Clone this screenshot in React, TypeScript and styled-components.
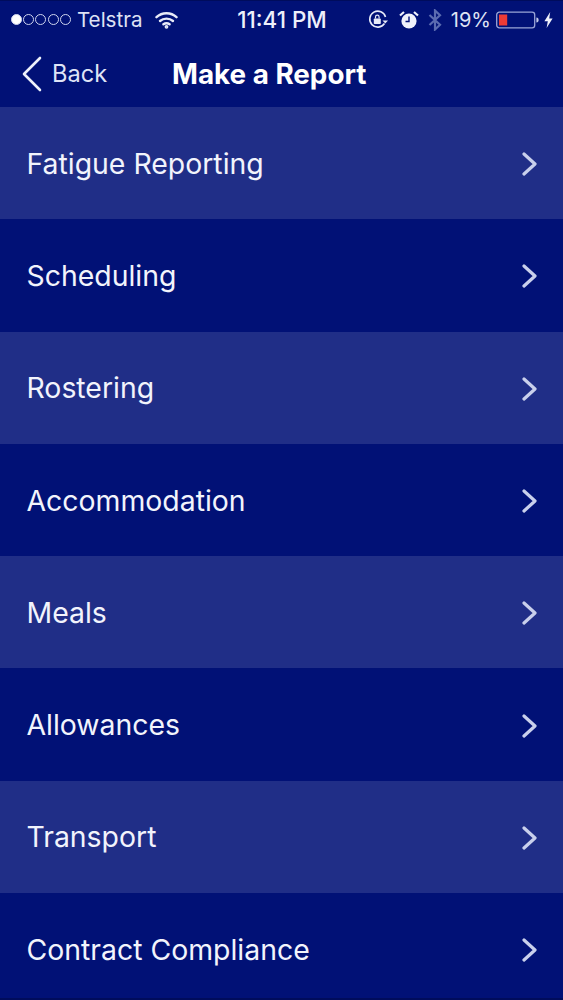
import React from 'react';
import styled, { createGlobalStyle } from 'styled-components';

const GlobalStyle = createGlobalStyle`
  html, body {
    margin: 0;
    padding: 0;
    background: #011176;
    font-family: Inter, "Liberation Sans", sans-serif;
  }
`;

const Screen = styled.div`
  width: 563px;
  height: 1000px;
  box-sizing: border-box;
  border-top: 1px solid #000c5c;
  border-bottom: 2px solid #000c5c;
  overflow: hidden;
  display: flex;
  flex-direction: column;
  background: #011176;
  color: #f2f4fc;
`;

const StatusBar = styled.div`
  height: 39px;
  flex-shrink: 0;
  box-sizing: border-box;
  padding: 0 10px 2px 11px;
  display: grid;
  grid-template-columns: 1fr auto 1fr;
  align-items: center;
  font-size: 20px;
  color: #dfe3f4;
`;

const StatusLeft = styled.div`
  display: flex;
  align-items: center;
`;

const StatusRight = styled.div`
  display: flex;
  align-items: center;
  justify-content: flex-end;
`;

const Clock = styled.div`
  font-size: 22.4px;
  font-weight: 500;
  color: #eef0fa;
`;

const Dot = styled.span<{ $filled?: boolean }>`
  width: 11px;
  height: 11px;
  box-sizing: border-box;
  margin-right: 1.2px;
  border-radius: 50%;
  border: 1px solid #cfd5ee;
  background: ${p => (p.$filled ? '#ffffff' : 'transparent')};
`;

const Carrier = styled.span`
  margin-left: 5px;
  margin-right: 12px;
  font-size: 20.6px;
`;

const NavBar = styled.div`
  height: 67px;
  flex-shrink: 0;
  box-sizing: border-box;
  padding-left: 22px;
  display: flex;
  align-items: center;
`;

const BackLabel = styled.span`
  margin-left: 10px;
  width: 120px;
  font-size: 23.6px;
  color: #dfe4f6;
`;

const Title = styled.div`
  font-size: 27.8px;
  font-weight: 700;
  color: #ffffff;
`;

const List = styled.div`
  display: flex;
  flex-direction: column;
`;

const Row = styled.div<{ $light: boolean }>`
  height: 112.3px;
  flex-shrink: 0;
  box-sizing: border-box;
  padding: 0 25px 0 26.5px;
  display: flex;
  align-items: center;
  justify-content: space-between;
  font-size: 28.4px;
  background: ${p => (p.$light ? '#202e87' : '#011176')};
`;

const ChevronIcon = styled.svg`
  margin-top: 2px;
`;

const Wifi = () => (
  <svg width="23" height="18" viewBox="0 0 23 18" fill="none" stroke="#e8ebf8" strokeWidth="2.4" strokeLinecap="round">
    <path d="M1.5 6.2C7 1 16 1 21.5 6.2" />
    <path d="M5 10C8.6 6.8 14.4 6.8 18 10" />
    <path d="M8.4 13.3C10.2 12 12.8 12 14.6 13.3" />
    <circle cx="11.5" cy="15.8" r="0.7" fill="#e8ebf8" />
  </svg>
);

const RotationLock = () => (
  <svg width="22" height="22" viewBox="0 0 22 22" fill="none">
    <path d="M17.5 14.5A8 8 0 1 1 18.5 8" stroke="#e8ebf8" strokeWidth="1.6" />
    <path d="M15.5 11.5h5.5l-2.7 3z" fill="#e8ebf8" />
    <rect x="6.8" y="9.5" width="7" height="5.5" rx="0.8" fill="#e8ebf8" />
    <path d="M8.5 9.5V8a1.8 1.8 0 0 1 3.6 0v1.5" stroke="#e8ebf8" strokeWidth="1.2" />
  </svg>
);

const Alarm = () => (
  <svg width="20" height="20" viewBox="0 0 20 20" fill="none">
    <circle cx="10" cy="11" r="7.6" fill="#f0f2fb" />
    <path d="M10 6.5V11.5H6.5" stroke="#011176" strokeWidth="1.4" />
    <path d="M1 5.5L5 2M19 5.5L15 2" stroke="#f0f2fb" strokeWidth="2.2" />
  </svg>
);

const Bluetooth = () => (
  <svg width="14" height="22" viewBox="0 0 14 22" fill="none" stroke="#5b6bb0" strokeWidth="2.2">
    <path d="M1.5 6L12 15.8L7 20.5V1.5L12 6.2L1.5 16" />
  </svg>
);

const Battery = () => (
  <svg width="43" height="18" viewBox="0 0 43 18" fill="none">
    <rect x="0.7" y="1.2" width="38" height="15.6" rx="2.6" stroke="#9aa5d6" strokeWidth="1.3" />
    <rect x="3" y="3.5" width="8.2" height="11" fill="#ee3b35" />
    <path d="M40.4 6.5c1.6 0 2.2 1 2.2 2.5s-.6 2.5-2.2 2.5z" fill="#c5cbe8" />
  </svg>
);

const Bolt = () => (
  <svg width="9" height="16" viewBox="0 0 9 16">
    <path d="M6.2 0L0.4 9.2H3.8L2.6 16L8.6 6.4H5.2z" fill="#eef0fa" />
  </svg>
);

const BackChevron = () => (
  <svg width="20" height="36" viewBox="0 0 20 36" fill="none" stroke="#eef1fb" strokeWidth="2.6" strokeLinecap="round" strokeLinejoin="round">
    <path d="M18 2L2 18L18 34" />
  </svg>
);

const Chevron = () => (
  <ChevronIcon width="16" height="24" viewBox="0 0 16 24" fill="none" stroke="#c9d0ec" strokeWidth="3.2" strokeLinecap="round" strokeLinejoin="round">
    <path d="M2 2L13 12L2 22" />
  </ChevronIcon>
);

const Gap = styled.span<{ $w: number }>`
  display: inline-block;
  width: ${p => p.$w}px;
`;

const items = [
  'Fatigue Reporting',
  'Scheduling',
  'Rostering',
  'Accommodation',
  'Meals',
  'Allowances',
  'Transport',
  'Contract Compliance',
];

const App: React.FC = () => (
  <Screen>
    <GlobalStyle />
    <StatusBar>
      <StatusLeft>
        <Dot $filled />
        <Dot />
        <Dot />
        <Dot />
        <Dot />
        <Carrier>Telstra</Carrier>
        <Wifi />
      </StatusLeft>
      <Clock>11:41 PM</Clock>
      <StatusRight>
        <RotationLock />
        <Gap $w={10} />
        <Alarm />
        <Gap $w={9} />
        <Bluetooth />
        <Gap $w={9} />
        <span>19%</span>
        <Gap $w={5} />
        <Battery />
        <Gap $w={5} />
        <Bolt />
      </StatusRight>
    </StatusBar>
    <NavBar>
      <BackChevron />
      <BackLabel>Back</BackLabel>
      <Title>Make a Report</Title>
    </NavBar>
    <List>
      {items.map((item, i) => (
        <Row key={item} $light={i % 2 === 0}>
          <span>{item}</span>
          <Chevron />
        </Row>
      ))}
    </List>
  </Screen>
);

export default App;
